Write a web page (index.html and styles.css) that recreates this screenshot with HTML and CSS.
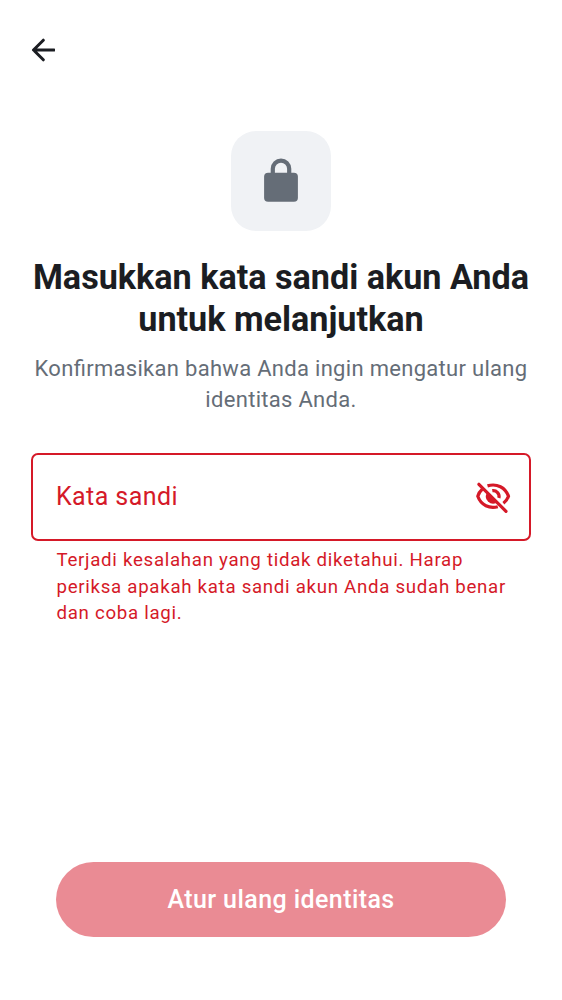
FILE: index.html
```html
<!DOCTYPE html>
<html lang="id">
<head>
<meta charset="utf-8">
<title>Atur ulang identitas</title>
<link rel="stylesheet" href="styles.css">
</head>
<body>
<main class="screen">
  <header class="topbar">
    <svg class="back" viewBox="0 0 24 26"><path d="M23 13H2.800M12.300 3.200 2.500 13l9.800 9.800"/></svg>
  </header>
  <section class="intro">
    <div class="badge">
      <svg class="lock" viewBox="0 0 34 45"><rect x=".1" y="15.800" width="33.800" height="29" rx="4"/><path d="M8.800 18V11.800a8.200 8.200 0 0 1 16.400 0V18"/></svg>
    </div>
    <h1 class="title"><span class="line">Masukkan kata sandi akun Anda</span><span class="line">untuk melanjutkan</span></h1>
    <p class="subtitle"><span class="line">Konfirmasikan bahwa Anda ingin mengatur ulang</span><span class="line">identitas Anda.</span></p>
  </section>
  <section class="form">
    <div class="field">
      <span class="label">Kata sandi</span>
      <svg class="eye" viewBox="0 0 38 38">
        <path class="slash" d="M4.900 6.300 32 33.300"/>
        <path d="M13.500 7.900C23 5 31.500 9.700 34.500 18.300Q33 22.500 29.400 25.200"/>
        <path d="M8.200 11.200Q5 14 3.800 18.300C7 27.300 15.500 31 23.800 28.700"/>
        <path d="M18.300 12.700A5.900 5.900 0 0 1 24.900 20"/>
        <path class="pupil" d="M12.600 15.200 22.300 24.900A7.300 7.300 0 0 1 12.600 15.200z"/>
      </svg>
    </div>
    <p class="error"><span class="line">Terjadi kesalahan yang tidak diketahui. Harap</span><span class="line">periksa apakah kata sandi akun Anda sudah benar</span><span class="line">dan coba lagi.</span></p>
  </section>
  <button class="submit">Atur ulang identitas</button>
</main>
</body>
</html>
```
FILE: styles.css
```css
* { box-sizing: border-box; }
body { margin: 0; background: #fff; font-family: Roboto, sans-serif; }
.screen { width: 562px; height: 1000px; padding: 37px 31px 62.6px; display: flex; flex-direction: column; color: #1b1d22; }
.topbar { height: 94px; }
.back { display: block; width: 24px; height: 26px; fill: none; stroke: #1b1d22; stroke-width: 3; stroke-linecap: round; stroke-linejoin: round; }
.intro { display: flex; flex-direction: column; align-items: center; text-align: center; }
.badge { width: 100px; height: 100px; border-radius: 25px; background: #f0f2f5; display: flex; justify-content: center; padding-top: 26px; }
.lock { width: 34px; height: 45px; fill: #656d77; }
.lock path { fill: none; stroke: #656d77; stroke-width: 4.2; }
.line { display: block; white-space: nowrap; }
.title { margin: 25px 0 0; font-size: 34.2px; line-height: 42px; font-weight: 700; letter-spacing: -.02px; }
.subtitle { margin: 13px 0 0; font-size: 22px; line-height: 31px; letter-spacing: .3px; font-feature-settings: "liga" 1; color: #656d77; }
.form { margin-top: 38px; }
.field { height: 88px; border: 2px solid #d51928; border-radius: 7px; padding: 0 17px 0 23px; display: flex; align-items: center; justify-content: space-between; color: #d51928; }
.label { padding-bottom: 1px; font-size: 25px; letter-spacing: .42px; }
.eye { width: 38px; height: 38px; fill: none; stroke: #d51928; stroke-width: 3.2; }
.eye .slash { stroke-linecap: round; }
.eye .pupil { fill: #d51928; stroke: none; }
.error { margin: 6px 0 0 25.5px; font-size: 18.7px; line-height: 26.5px; letter-spacing: .7px; color: #d51928; }
.submit { margin: auto 25px 0; height: 75px; padding: 0 0 1px; border: 0; border-radius: 38px; background: #ea8b94; color: #fff; font: 500 25px Roboto, sans-serif; letter-spacing: .42px; }
```
